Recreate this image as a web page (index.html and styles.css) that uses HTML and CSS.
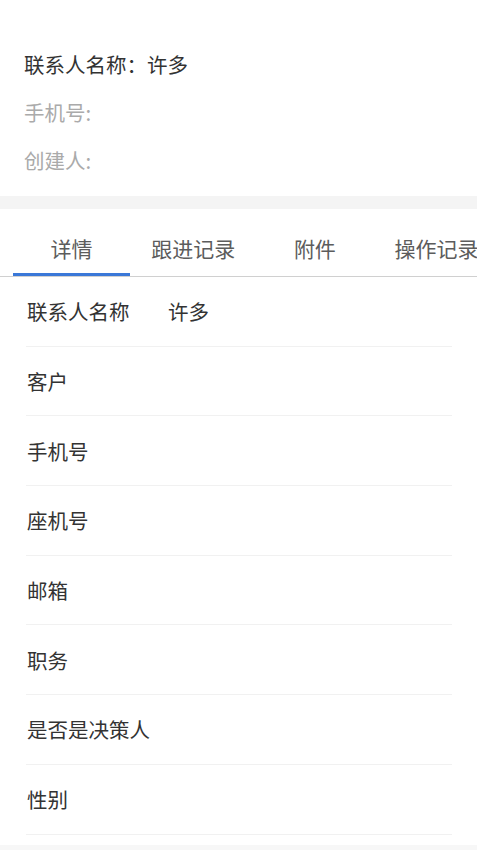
FILE: index.html
```html
<!DOCTYPE html>
<html lang="zh-CN">
<head>
<meta charset="utf-8">
<link rel="stylesheet" href="styles.css">
</head>
<body>
<div class="page">
  <section class="summary">
    <div class="summary-line primary">联系人名称：许多</div>
    <div class="summary-line muted">手机号:</div>
    <div class="summary-line muted">创建人:</div>
  </section>
  <div class="band"></div>
  <nav class="tabs">
    <div class="tab active">详情</div>
    <div class="tab">跟进记录</div>
    <div class="tab">附件</div>
    <div class="tab">操作记录</div>
  </nav>
  <section class="details">
    <div class="row"><span class="label">联系人名称</span><span class="value">许多</span></div>
    <div class="row"><span class="label">客户</span></div>
    <div class="row"><span class="label">手机号</span></div>
    <div class="row"><span class="label">座机号</span></div>
    <div class="row"><span class="label">邮箱</span></div>
    <div class="row"><span class="label">职务</span></div>
    <div class="row"><span class="label">是否是决策人</span></div>
    <div class="row"><span class="label">性别</span></div>
  </section>
  <div class="footer-band"></div>
</div>
</body>
</html>
```

FILE: styles.css
```css
html, body {
  margin: 0;
  padding: 0;
  background: #ffffff;
}
body {
  font-family: "Noto Sans CJK SC", "Noto Sans", sans-serif;
  width: 477px;
  overflow: hidden;
}
.page {
  display: flex;
  flex-direction: column;
}
.summary {
  padding: 40px 24px 12px;
}
.summary-line {
  font-size: 20.5px;
  line-height: 48px;
  white-space: nowrap;
}
.summary-line.primary {
  color: #333333;
}
.summary-line.muted {
  color: #aaaaaa;
}
.band {
  height: 13px;
  background: #f4f4f4;
}
.tabs {
  display: flex;
  gap: 4.7px;
  padding-left: 13px;
  border-bottom: 1px solid #d0d0d0;
  white-space: nowrap;
  overflow: hidden;
}
.tab {
  flex: 0 0 117px;
  text-align: center;
  font-size: 21px;
  line-height: 28px;
  color: #5c5c5c;
  padding: 25px 0 11px;
  border-bottom: 3px solid transparent;
}
.tab.active {
  border-bottom-color: #3a78d8;
}
.details {
  padding: 0 25px 0 26px;
}
.row {
  display: flex;
  align-items: center;
  padding: 20.35px 0 20.35px 1px;
  border-bottom: 1px solid #f1f1f1;
  font-size: 20.5px;
  line-height: 28px;
  color: #333333;
}
.label {
  margin-right: 38.5px;
}
.footer-band {
  margin-top: 10px;
  height: 20px;
  background: #f7f7f7;
}
```
